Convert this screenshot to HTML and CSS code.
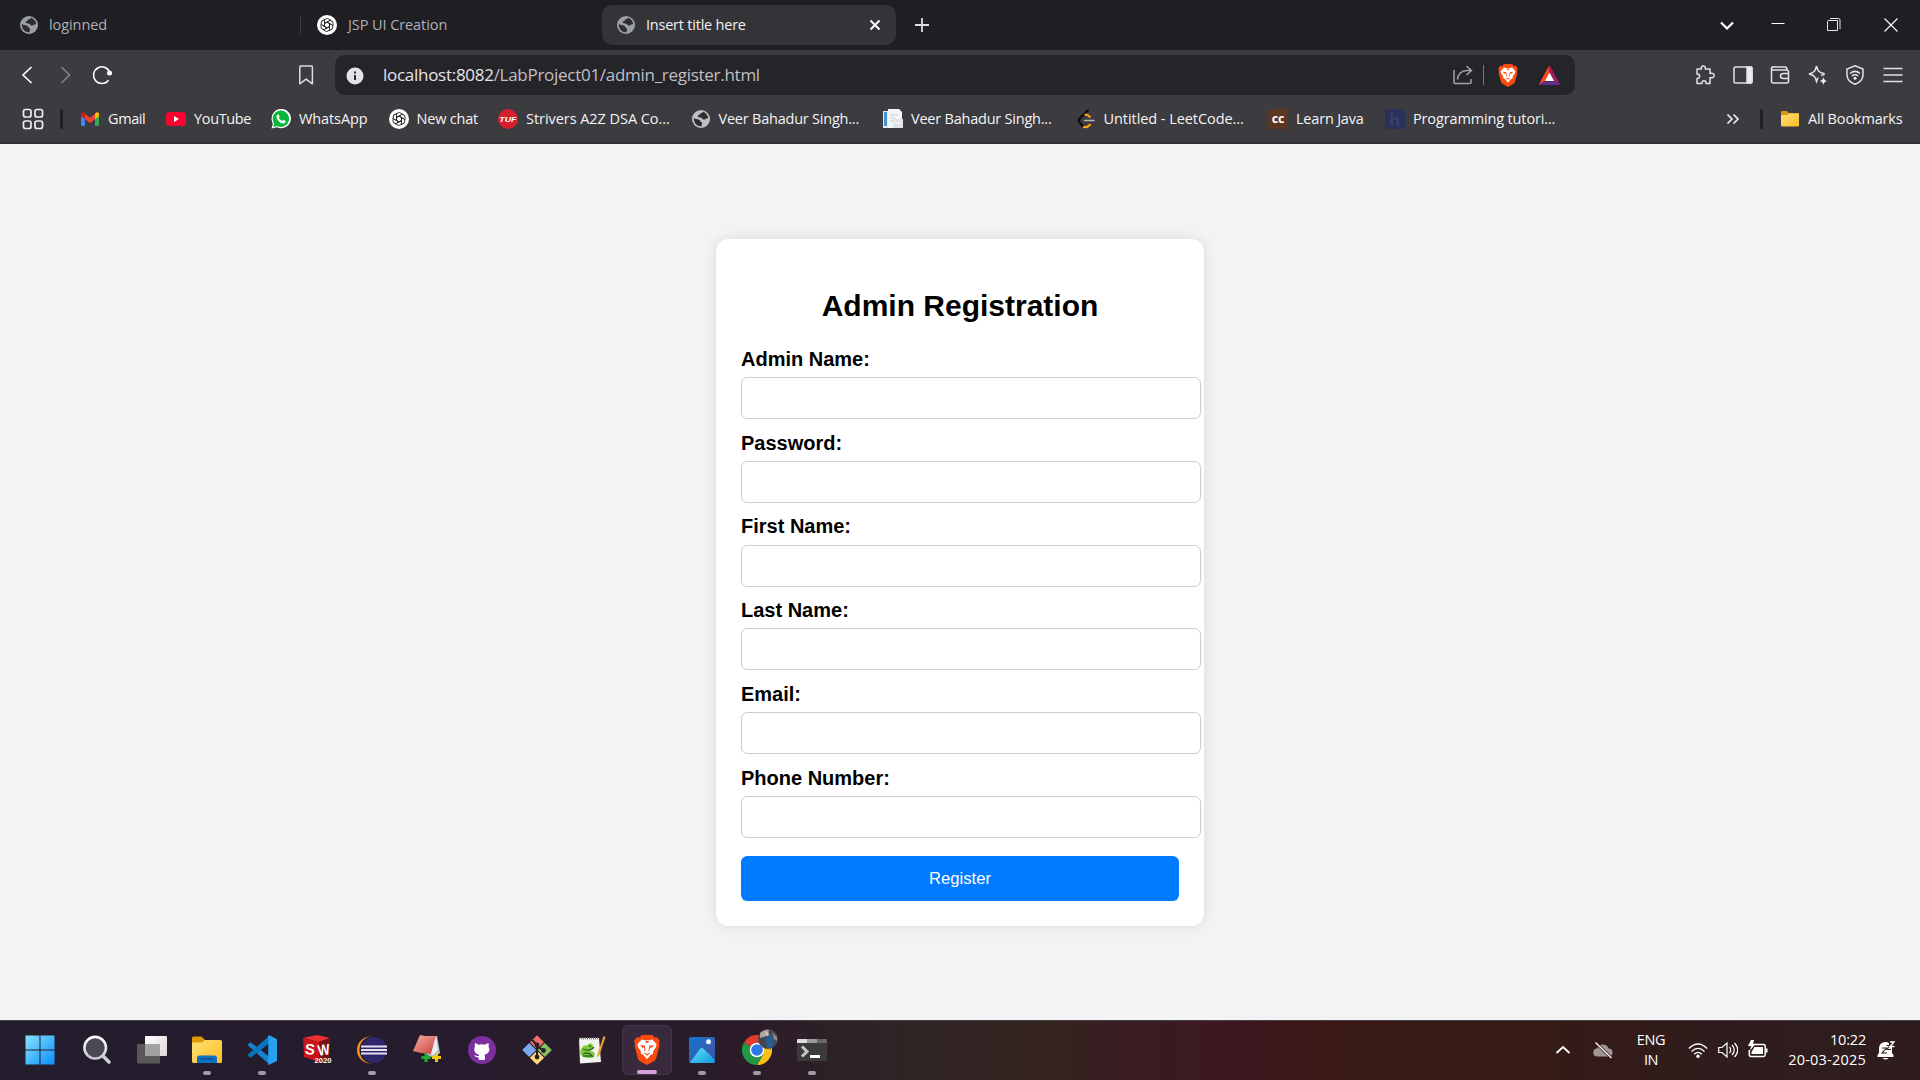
FILE: index.html
```html
<!DOCTYPE html>
<html lang="en">
<head>
<meta charset="utf-8">
<title>Insert title here</title>
<link rel="stylesheet" href="styles.css">
</head>
<body>
<svg class="defs" aria-hidden="true">
  <defs>
    <symbol id="globe" viewBox="0 0 20 20"><circle cx="10" cy="10" r="9" fill="currentColor"/><path d="M2.800 8.800c1.400 1.600 3.600 1.400 5.200 1.900 1.600.5 1 2 2.200 2.300 1.400.3.800 1.800.3 4.300-4.300.4-7.900-3.200-7.700-8.500ZM12.200 2.800c-.5 1.500-2.700.9-3.200 2.200-.4 1.200-2.300 1-2.300 2.300 0 1.300 2.300 1 3.500 1.400 1.500.5 1.300 1.900 2.800 1.900 1.600 0 1.600-1.600 4.200-1.300-.3-3.200-2.300-5.600-5-6.500Z" fill="#2d2d32"/></symbol>
    <symbol id="gpt" viewBox="0 0 20 20"><circle cx="10" cy="10" r="10" fill="#fff"/><g fill="none" stroke="#222" stroke-width=".9"><path id="petal" d="M7.500 8.500V6.200A2.700 2.700 0 0 1 11.700 4L14 5.400M7.500 8.500 10 7.100 14.200 9.500"/><use href="#petal" transform="rotate(60 10 10)"/><use href="#petal" transform="rotate(120 10 10)"/><use href="#petal" transform="rotate(180 10 10)"/><use href="#petal" transform="rotate(240 10 10)"/><use href="#petal" transform="rotate(300 10 10)"/></g></symbol>
    <symbol id="brave" viewBox="0 0 24 28"><path d="M7 0h10l2 2.300 2.500-.3L24 5.500l-.8 2.500.4 2-2.800 11c-.4 1.500-1.200 2.600-2.400 3.400L12 28l-6.400-3.600c-1.200-.8-2-1.900-2.400-3.400L.4 10l.4-2L0 5.500 2.500 2l2.500.3Z" fill="#fb4a10"/><path d="m7 4.300 3 .5h4l3-.5 4 4.400-.9 3.300-2.400 3.200.2 2-2.500 1.500-3.400 4-3.400-4-2.500-1.500.2-2L3.900 12 3 8.700Z" fill="#fff"/><path d="m5.500 9.500 4.300.4.900 4.700-1.500 1.700 2.800 1.400 2.800-1.400-1.500-1.700.9-4.700 4.300-.4-2.700 2.800-.8-1-1 4 1 1.500-3 2.500-3-2.500 1-1.500-1-4-.8 1ZM10 5.500h4L12 8Z" fill="#fb4a10"/></symbol>
    <linearGradient id="win" gradientUnits="userSpaceOnUse" x1="0" y1="0" x2="30" y2="30"><stop stop-color="#8be3ff"/><stop offset="1" stop-color="#078efb"/></linearGradient>
    <linearGradient id="lens" x2="0" y2="1"><stop stop-color="#fff"/><stop offset="1" stop-color="#c9cbd2"/></linearGradient>
    <linearGradient id="fold" x2="1" y2="1"><stop stop-color="#ffe07a"/><stop offset="1" stop-color="#fdbd22"/></linearGradient>
    <linearGradient id="grey" x2="1" y2="1"><stop stop-color="#fff"/><stop offset="1" stop-color="#d8d8d8"/></linearGradient>
    <linearGradient id="photo" x2="1" y2="1"><stop stop-color="#0b78d0"/><stop offset=".6" stop-color="#3a5eb2"/><stop offset="1" stop-color="#2b4fa8"/></linearGradient>
    <linearGradient id="peak" x2="1" y2="1"><stop stop-color="#62e4fb"/><stop offset="1" stop-color="#0d96dc"/></linearGradient>
    <linearGradient id="bookc" x2="1" y2="1"><stop stop-color="#f5b0a8"/><stop offset="1" stop-color="#c9403b"/></linearGradient>
  </defs>
</svg>

<header class="browser">
  <div class="tabs">
    <div class="tab tab-first"><svg class="i20 dim"><use href="#globe"/></svg><span>loginned</span></div>
    <div class="tab tab-second"><svg class="i20"><use href="#gpt"/></svg><span>JSP UI Creation</span></div>
    <div class="tab tab-active"><svg class="i20 dim"><use href="#globe"/></svg><span class="tab-title">Insert title here</span>
      <svg class="i20" viewBox="0 0 20 20"><path d="m5.500 5.500 9 9m0-9-9 9" stroke="#fff" stroke-width="2"/></svg></div>
    <svg class="new-tab" viewBox="0 0 20 20"><path d="M10 3v14M3 10h14" stroke="#ddd" stroke-width="1.800"/></svg>
    <div class="window-buttons">
      <svg viewBox="0 0 20 20"><path d="m4 7.500 6 6 6-6" stroke="#fff" stroke-width="2.200"/></svg>
      <svg viewBox="0 0 20 20"><path d="M3.500 8.500h13" stroke="#fff"/></svg>
      <svg viewBox="0 0 20 20"><path d="M4.500 5.500h9v10h-10v-9q0-1 1-1ZM6 3.500h8.500q1.500 0 1.500 1.500v9" stroke="#e8e8ea"/></svg>
      <svg viewBox="0 0 20 20"><path d="m3.500 3.500 13 13m0-13-13 13" stroke="#fff" stroke-width="1.100"/></svg>
    </div>
  </div>

  <div class="toolbar">
    <div class="nav">
      <svg viewBox="0 0 20 20"><path d="m14.500 2-8.500 8 8.500 8" stroke="#fff" stroke-width="1.700"/></svg>
      <svg viewBox="0 0 20 20"><path d="m6.500 2 8 8-8 8" stroke="#838287" stroke-width="1.700"/></svg>
      <svg viewBox="0 0 20 20"><path d="M18 8.500A8.300 8.300 0 1 0 16.500 15.200" stroke="#fff" stroke-width="1.500"/><circle cx="17.500" cy="8" r="2.500" fill="#fff"/></svg>
    </div>
    <svg class="mark" viewBox="0 0 20 20"><path d="M3.800 1.800q0-.8.8-.8h11q.8 0 .8.800v17l-6.300-4.700-6.300 4.700Z" stroke="#ddd" stroke-width="1.500" stroke-linejoin="round"/></svg>
    <div class="address">
      <svg class="i20 info" viewBox="0 0 20 20"><circle cx="10" cy="10" r="8.500" fill="#e4e3ea"/><path d="M9 9h2v5H9Zm0-3.500h2v2H9Z" fill="#2a292e"/></svg>
      <span class="url">localhost:8082<b>/LabProject01/admin_register.html</b></span>
      <svg class="share" viewBox="0 0 20 20"><path d="M1 5v12.500q0 1 1 1h15q1 0 1-1V14M4.500 14.500c.3-5.300 4-9 9.500-9h4M13.500 1l5 4.500-5 4.500" stroke="#a3a2a8" stroke-width="1.500"/></svg>
      <i class="thin"></i>
      <svg class="lion" viewBox="0 0 24 28"><use href="#brave"/></svg>
      <svg class="bat" viewBox="0 0 22 20"><path d="M11 0 0 20 11 13Z" fill="#ff4a1f"/><path d="m11 0 11 20-11-7Z" fill="#9e1f63"/><path d="M0 20h22l-5-3.500H5Z" fill="#662d91"/><path d="M11 7.500 6.500 16h9Z" fill="#fff"/></svg>
    </div>
    <div class="actions">
      <svg viewBox="0 0 20 20"><path d="M2 4h4.500c-1.500-4 5-4 3.700 0H15v4.500c5.500-1.700 5.500 5.500 0 4v6h-4c.6-3.800-4.800-3.800-4 0H2v-5c3.500 0 3.500-4.500 0-4.500Z" stroke-linejoin="round"/></svg>
      <svg viewBox="0 0 20 20"><rect x="1" y="2" width="18" height="16" rx="1.500"/><path d="M14 2h4q1 0 1 1v14q0 1-1 1h-4Z" fill="#eee"/></svg>
      <svg viewBox="0 0 20 20"><path d="M1.500 5v11q0 2 2 2h13q2 0 2-2V7q0-2-2-2H2.500Q1 4.500 1.500 3T4 2h11q2 0 2 3M18.500 8.500h-5q-3 0-3 2.500t3 2.500h5"/></svg>
      <svg viewBox="0 0 20 20"><path d="M8.500 1c1.200 5 2.500 6.300 7.500 7.500v1l-3 1M8.500 1c-1.200 5-2.500 6.700-7.500 8 5 1.200 6.300 2.500 7.500 7.500l1.500-4"/><path d="M15.500 12q.5 3.300 3.500 4-3 .6-3.500 4-.6-3.400-4-4 3.400-.7 4-4Z" fill="#eee" stroke="none"/></svg>
      <svg viewBox="0 0 20 20"><path d="M10 .8 18 4v6c0 4.500-3.500 7.500-8 9.300C5.500 17.500 2 14.500 2 10V4ZM5 8.500q5-4.200 10 0M6.800 11q3.200-2.500 6.400 0"/><circle cx="10" cy="13.200" r="1.500" fill="#eee" stroke="none"/></svg>
      <svg viewBox="0 0 20 20"><path d="M.5 3.500h19M.5 10h19M.5 16.500h19"/></svg>
    </div>
  </div>

  <nav class="bookmarks">
    <svg class="grid" viewBox="0 0 22 22"><g fill="none" stroke="#eee" stroke-width="1.700"><rect x="1.500" y="1.500" width="7.500" height="7.500" rx="2"/><rect x="13" y="1.500" width="7.500" height="7.500" rx="2"/><rect x="1.500" y="13" width="7.500" height="7.500" rx="2"/><rect x="13" y="13" width="7.500" height="7.500" rx="2"/></g></svg>
    <i class="thick"></i>
    <a class="bm w-gmail"><svg class="i20" viewBox="0 0 20 20"><path d="M1 5v10.500q0 1.500 1.500 1.500H5V8Z" fill="#4285f4"/><path d="M15 8v9h2.500q1.500 0 1.500-1.500V5Z" fill="#34a853"/><path d="m5 4.700 5 4 5-4v5.600l-5 3.900-5-3.900Z" fill="#ea4335"/><path d="M1 5.500c0-2.500 2-3 4-.8v5.600L1 7.300Z" fill="#c5221f"/><path d="M19 5.500c0-2.500-2-3-4-.8v5.600l4-3Z" fill="#fbbc04"/></svg><span>Gmail</span></a>
    <a class="bm w-yt"><svg class="i20" viewBox="0 0 20 20"><rect y="3" width="20" height="14" rx="3.500" fill="#ff0033"/><path d="m8 7 5 3-5 3Z" fill="#fff"/></svg><span>YouTube</span></a>
    <a class="bm w-wa"><svg class="i20" viewBox="0 0 20 20"><path d="M.5 19.500 1.900 14.500A9.700 9.700 0 1 1 6 18.300Z" fill="#fff"/><path d="m2.200 17.900.9-3.500A8.200 8.200 0 1 1 6 17Z" fill="#08b83c"/><path d="m6.500 5.500 1-.2 1.200 2.500-.9 1.300q1.200 2.200 3.300 3l1.100-1.300 2.500 1.200q0 2.300-2.500 2.500Q7.500 14 5.500 8.500q-.2-2 1-3Z" fill="#fff"/></svg><span>WhatsApp</span></a>
    <a class="bm w-new"><svg class="i20"><use href="#gpt"/></svg><span>New chat</span></a>
    <a class="bm w-tuf"><svg class="i20" viewBox="0 0 20 20"><circle cx="10" cy="10" r="10" fill="#d51f31"/><text x="1.300" y="12.500" textLength="17" lengthAdjust="spacingAndGlyphs" class="tuf">TUF</text></svg><span>Strivers A2Z DSA Co...</span></a>
    <a class="bm w-veer"><svg class="i20 bright"><use href="#globe"/></svg><span>Veer Bahadur Singh...</span></a>
    <a class="bm w-veer"><svg class="i20" viewBox="0 0 20 20"><path d="M0 2h6v17H0Z" fill="#e6e9ed"/><path d="M1 3h3v14H1Z" fill="#4793cf"/><path d="M5 0h11l3 3v16H5Z" fill="#f4f5f7"/><path d="M7 6h8M7 9h5M7 12h3" stroke="#c3c8cf"/><path d="M10 10h10v9H10Z" fill="#dfe2e7"/><path d="M11 14h8" stroke="#fff"/></svg><span>Veer Bahadur Singh...</span></a>
    <a class="bm w-leet"><svg class="i20" viewBox="0 0 20 20"><g fill="none" stroke-width="2.200" stroke-linecap="round"><path d="M12 1.300 3.500 9.800q-1.500 1.700 0 3.600l3 3.400" stroke="#0a0a0a"/><path d="M9.500 5.600q2-.3 4.300 2.200M8 18q3.200.8 6-2.200" stroke="#ffa116"/><path d="M8.500 11.500H18" stroke="#b3b3b3" stroke-width="1.600"/></g></svg><span>Untitled - LeetCode...</span></a>
    <a class="bm w-learn"><svg class="i20" viewBox="0 0 20 20"><rect width="20" height="20" fill="#5b3621"/><text x="10" y="14" text-anchor="middle" class="cc">cc</text></svg><span>Learn Java</span></a>
    <a class="bm w-prog"><svg class="i20" viewBox="0 0 20 20"><rect width="20" height="20" rx="2" fill="#29325a"/><path d="M5.500 3.500H8v13H5.500ZM8 9q2-1.500 3.500-1 2.500.5 2.500 3v5.500h-2.500V11q-1.500-1.800-3.500.3" fill="#3a3f63"/></svg><span>Programming tutori...</span></a>
    <svg class="more" viewBox="0 0 14 14"><path d="m1.500 2.500 4.500 4.500-4.500 4.500M7.500 2.500 12 7l-4.500 4.500" stroke="#eee" stroke-width="1.700"/></svg>
    <i class="thick end"></i>
    <a class="bm w-all"><svg class="i20" viewBox="0 0 20 20"><path d="M1 3q0-1 1-1h5l2 2h9q1 0 1 1v12H1Z" fill="#d99a12"/><path d="M1 6h6.500L9.500 4.500H18q1 0 1 1V16q0 1.500-1.500 1.500h-15Q1 17.500 1 16Z" fill="url(#fold)"/></svg><span>All Bookmarks</span></a>
  </nav>
</header>

<main class="page">
  <form class="card">
    <h2>Admin Registration</h2>
    <label for="a">Admin Name:</label><input id="a" type="text">
    <label for="b">Password:</label><input id="b" type="password">
    <label for="c">First Name:</label><input id="c" type="text">
    <label for="d">Last Name:</label><input id="d" type="text">
    <label for="e">Email:</label><input id="e" type="email">
    <label for="f">Phone Number:</label><input id="f" type="text">
    <button type="button">Register</button>
  </form>
</main>

<footer class="taskbar">
  <div class="app start"><svg viewBox="0 0 30 30"><path d="M.5.500h14v14H.5ZM15.500.500h14v14h-14ZM.5 15.500h14v14H.5ZM15.500 15.500h14v14h-14Z" fill="url(#win)"/></svg></div>
  <div class="app"><svg viewBox="0 0 30 30"><path d="m20 20 7 7" stroke="#cfd1d8" stroke-width="3.600" stroke-linecap="round"/><circle cx="13.200" cy="12.700" r="10.800" fill="#4b4757" stroke="url(#lens)" stroke-width="2.600"/></svg></div>
  <div class="app"><svg viewBox="0 0 30 30"><rect x="8" y="1" width="22" height="20" rx="1" fill="url(#grey)"/><rect x="0" y="9" width="23" height="19.500" rx="1" fill="#5d5c5c" opacity=".93"/><path d="M8 9h15v12H8Z" fill="#a2a2a2"/></svg></div>
  <div class="app run"><svg viewBox="0 0 30 30"><path d="M0 3q0-1.500 1.500-1.500h8L13 5v7H0Z" fill="#e09a08"/><path d="M0 7.500h10L13 5h15.500Q30 5 30 6.500v20q0 1.500-1.500 1.500h-27Q0 28 0 26.500Z" fill="url(#fold)"/><path d="M5 28v-5q0-2.500 2.500-2.500h15Q25 20.500 25 23v5Z" fill="#0b70c1"/><path d="M8.500 24h13" stroke="#06457e"/></svg></div>
  <div class="app run"><svg viewBox="0 0 30 30"><path d="m.5 10 2.300-2.300q.7-.5 1.500 0L22.500 22v7.500Z" fill="#1783cf"/><path d="m.5 20 2.300 2.300q.7.500 1.500 0L22.500 8V.5Z" fill="#0874bd"/><path d="m22 .2 7 3.300q1 .5 1 1.500v20q0 1-1 1.500l-7 3.300q-1 .3-.8-.8V1Q21 0 22 .2Z" fill="#26a0ef"/></svg></div>
  <div class="app"><svg viewBox="0 0 30 30"><path d="m1 3 14-3 13 3-11 4Z" fill="#ef2f32"/><path d="m1 3 16 4v20L2 22Z" fill="#c8151c"/><path d="m17 7 11-4-1 19-10 5Z" fill="#7e1015"/><g class="sw"><text x="3" y="19.500" textLength="10" lengthAdjust="spacingAndGlyphs" transform="rotate(5 8 14)">S</text><text x="15.500" y="20" textLength="12" lengthAdjust="spacingAndGlyphs" transform="rotate(-8 21 14)">W</text></g><text x="12.500" y="28" textLength="17" lengthAdjust="spacingAndGlyphs" class="year">2020</text></svg></div>
  <div class="app run"><svg viewBox="0 0 30 30"><circle cx="13.500" cy="15" r="13.500" fill="#f7941e"/><circle cx="16.500" cy="15" r="14" fill="#221b2b"/><circle cx="17" cy="15" r="13" fill="#30266b"/><path d="M4 11.500h26M4 15h26M4 18.500h26" stroke="#e4e2f1" stroke-width="2"/></svg></div>
  <div class="app"><svg viewBox="0 0 30 30"><path d="M8 1h17l3 17-6 5-7-3Z" fill="#b9c0c5"/><path d="M8 0q8 2 16 1L19 19Q10 19 1 16Z" fill="url(#bookc)"/><path d="m24 1 2 14-5 5-2-1Z" fill="#e8eef0"/><path d="M14 18v9m-4.500-4.500h9" stroke="#22ac37" stroke-width="3"/><path d="M24.500 18v9m-4.500-4.500h9" stroke="#f2c615" stroke-width="3"/></svg></div>
  <div class="app"><svg viewBox="0 0 30 30"><circle cx="15" cy="15" r="14" fill="#7d2fa0"/><path d="M11.500 24.500v-2.500c-2.500.7-3.500-.7-4.300-2 1.700 0 2 1.500 4.300 1l.8-1.300c-5-.8-6-5.500-4.300-8-.4-1.300-.2-2.700 0-3.500 1.700 0 2.500 1 3.500 1.500q3.300-.8 6.500 0c1-.5 1.800-1.500 3.500-1.500.3 1 .5 2.300 0 3.500 1.800 2.500.9 7.200-4.300 8 .8.800.8 1.600.8 2.300v2.500q-3 1-6.500 0Z" fill="#fff"/></svg></div>
  <div class="app"><svg viewBox="0 0 30 30"><g transform="rotate(45 15 15)"><rect x="4.500" y="4.500" width="10" height="10" fill="#ed6c68"/><rect x="15.500" y="4.500" width="10" height="10" fill="#83c35b"/><rect x="4.500" y="15.500" width="10" height="10" fill="#79a7f0"/><rect x="15.500" y="15.500" width="10" height="10" fill="#ffd978"/></g><path d="M10 5 15 10v13M15 11l7 5" stroke="#2b1d25" stroke-width="2"/><circle cx="15" cy="10" r="2.400" fill="#2b1d25"/><circle cx="15" cy="22" r="2.400" fill="#2b1d25"/><circle cx="21.500" cy="15.500" r="2.400" fill="#2b1d25"/></svg></div>
  <div class="app"><svg viewBox="0 0 30 30"><path d="M2 3h20l2 24-21 1.500Z" fill="#f1f4ee"/><path d="M2 3.500h20" stroke="#7b7f7a" stroke-width="2" stroke-dasharray="1 1"/><path d="M4 14c3-5 5-3 7-4 2-3 6-1 5 2l-3 4c4 0 6 3 4 6-4 2-11 1-13-2-1-2-1-4 0-6Z" fill="#82cc3c"/><path d="M6 14q7 3 11-2M6 19q6-3 10 3M12 10l2 2m-8 9h9" stroke="#296b20" stroke-width="1.300"/><path d="m28.500 2-6 18-2 3v-4L26.500 1Z" fill="#e8a12c"/></svg></div>
  <div class="app current"><svg viewBox="0 0 26 30"><use href="#brave" width="26" height="30"/></svg></div>
  <div class="app run"><svg viewBox="0 0 30 30"><rect x="2" y="2" width="26" height="26" rx="2" fill="url(#photo)"/><path d="M3 27.500 13 14q1.500-2 3.500-.3L28 25v1q0 2-2 2H4Z" fill="url(#peak)"/><circle cx="21.500" cy="6.800" r="2.500" fill="#eaf6ff"/></svg></div>
  <div class="app run chrome"><svg viewBox="0 0 30 30"><path d="M15 15 2 7.500A15 15 0 0 1 28 7.500H15Z" fill="#e33b2e"/><path d="M15 15H28.500l-.5-7.500A15 15 0 0 1 15 30l6.500-11Z" fill="#fbc116"/><path d="M15 15l6.500 3.700L15 30A15 15 0 0 1 2 7.500Z" fill="#229847"/><path d="M15 7.500h13L15 15Z" fill="#e33b2e"/><path d="M15 15h13.100V7.500L21 11Z" fill="#fbc116"/><circle cx="15" cy="15" r="7.300" fill="#fff"/><circle cx="15" cy="15" r="5.800" fill="#2d78e8"/></svg><svg class="avatar" viewBox="0 0 20 20"><circle cx="10" cy="10" r="10" fill="#44474d"/><path d="M2 4q5-4 9-3l-2 6-7 2Z" fill="#a9a8a5"/><path d="m7 7 6-2 3 4-1 9-6 1Z" fill="#285c91"/><path d="m14 3 5 5v4l-3-2Z" fill="#9a8a81"/><circle cx="9" cy="5" r="2" fill="#d9b7a0"/></svg></div>
  <div class="app run"><svg viewBox="0 0 30 30"><rect y="4" width="30" height="22" rx="1.500" fill="#3b3b3d"/><path d="M0 8V5q0-1 1-1h9v4Z" fill="#ddd"/><path d="M10 4h10v4H10Z" fill="#999"/><path d="M20 4h9q1 0 1 1v3H20Z" fill="#686868"/><path d="m5 11.500 5 5-5 5" stroke="#c8c8c8" stroke-width="3"/><path d="M13 21.500h10" stroke="#fff" stroke-width="3"/></svg></div>

  <div class="tray">
    <svg class="t-up" viewBox="0 0 20 20"><path d="m3.500 13 6.500-6 6.500 6" stroke="#fff" stroke-width="1.800"/></svg>
    <svg class="t-cloud" viewBox="0 0 20 20"><path d="M4.500 16.500a4 4 0 0 1-.3-8 6 6 0 0 1 11.300 0 4 4 0 0 1 0 8Z" fill="#a19594"/><path d="m2.500 2.500 16 15.500" stroke="#321b19" stroke-width="2.800"/><path d="m2.500 2.500 16 15.500" stroke="#fff" stroke-width="1.300"/></svg>
    <div class="lang"><span>ENG</span><span>IN</span></div>
    <svg class="t-wifi" viewBox="0 0 20 20"><path d="M.8 8.500q9.200-9 18.400 0M3.500 11.500q6.500-6.300 13 0M6.200 14.200q3.800-3.600 7.600 0" stroke="#fff" stroke-width="1.300"/><circle cx="10" cy="16.200" r="1.700" fill="#fff"/></svg>
    <svg class="t-vol" viewBox="0 0 20 20"><path d="M.7 7.500H4L9 3v14l-5-4.500H.7ZM11.500 7q2.500 3 0 6M14 5q4.500 5 0 10M16.500 3q6.500 7 0 14" stroke="#fff" stroke-width="1.200"/></svg>
    <svg class="t-bat" viewBox="0 0 20 20"><path d="M5 4.500h10.500q1.700 0 1.700 1.700v8.600q0 1.700-1.700 1.700H3q-1.700 0-1.700-1.700V10M18.800 8.500v4" stroke="#fff" stroke-width="1.500"/><path d="M6.500 7H15v7H3.500v-2Z" fill="#fff"/><path d="M3 0h3L5 4h2.500L2 10.500 3 6H0Z" fill="#fff"/></svg>
    <div class="clock"><span class="time">10:22</span><span class="date">20-03-2025</span></div>
    <svg class="t-bell" viewBox="0 0 20 20"><path d="M.5 17v-2L2 13V8.500A6.500 6.500 0 0 1 12 3v4h3v6l1.500 2v2Z" fill="#fff"/><path d="M5.500 18h6q-3 3-6 0Z" fill="#fff"/><path d="M5 8h4.500L5 13h5M9.500 5.500h3.500l-3 4h4" stroke="#2f1d1d" stroke-width="1.100"/><path d="M13 2h4l-4 4.500h4.500" stroke="#fff" stroke-width="1.300"/></svg>
  </div>
</footer>
</body>
</html>
```
FILE: styles.css
```css
* { box-sizing: border-box; }
html, body { margin: 0; height: 100%; }
body {
  display: flex; flex-direction: column; overflow: hidden;
  background: #f3f3f3;
  font-family: "Open Sans", "Noto Sans", sans-serif; font-size: 14.5px; letter-spacing: -.2px;
}
svg { display: block; flex: none; fill: none; }
.defs { position: absolute; width: 0; height: 0; }
.i20 { width: 20px; height: 20px; }
.dim { color: #9aa0a6; }
.bright { color: #bdc1c6; }

.browser { flex: none; height: 144px; background: #3c3b3f; border-bottom: 2px solid #333238; color: #fff; }

.tabs { display: flex; align-items: center; height: 50px; background: #1f1e23; white-space: nowrap; }
.tab { display: flex; align-items: center; height: 40px; color: #b1b0b5; }
.tab span, .bm span { padding-bottom: 2px; }
.tab-first { width: 301px; padding-left: 19px; gap: 10px; height: 20px; border-right: 1px solid #3c3b3f; letter-spacing: -.08px; }
.tab-second { width: 301px; padding-left: 16px; gap: 11px; letter-spacing: -.08px; }
.tab-active { width: 294px; padding: 0 11px 0 14px; gap: 10px; border-radius: 10px; background: #343337; color: #f2f1f5; }
.tab-title { flex: 1; letter-spacing: -.22px; }
.new-tab { width: 20px; height: 20px; margin-left: 16px; }
.window-buttons { display: flex; margin-left: auto; padding-right: 19px; }
.window-buttons svg { width: 20px; height: 20px; }
.window-buttons svg:nth-child(2) { margin-left: 31px; }
.window-buttons svg:nth-child(3) { margin-left: 36px; }
.window-buttons svg:nth-child(4) { margin-left: 37px; }

.toolbar { display: flex; align-items: center; height: 50px; }
.nav { display: flex; gap: 17.5px; padding-left: 17px; width: 296px; }
.nav svg, .mark { width: 20px; height: 20px; }
.address { display: flex; align-items: center; width: 1240px; height: 40px; margin-left: 19px; padding-left: 10px; border-radius: 10px; background: #252429; }
.info { margin-top: 2px; }
.url { flex: 1; margin-left: 18px; padding-bottom: 2px; font-size: 17px; letter-spacing: -.28px; color: #e5e4e8; white-space: nowrap; }
.url b { font-weight: 400; color: #c0bfc4; }
.share { width: 20px; height: 20px; }
.thin { width: 1px; height: 20px; margin: 0 14px 0 10px; background: #77767b; }
.lion { width: 20px; height: 23px; }
.bat { width: 23px; height: 20px; margin: 0 14px 0 20px; }
.actions { display: flex; gap: 17.5px; margin-left: 120px; }
.actions svg { width: 20px; height: 20px; stroke: #e2e1e6; stroke-width: 1.5; }

.bookmarks { display: flex; align-items: center; height: 38px; white-space: nowrap; }
.grid { width: 22px; height: 22px; margin-left: 22px; }
.thick { flex: none; width: 3px; height: 20px; margin: 0 17px 0 16px; border-radius: 2px; background: #1f1e23; }
.bm { display: flex; align-items: center; gap: 8px; flex: none; color: #f4f3f7; }
.w-gmail { width: 86px; letter-spacing: -.4px; }
.w-yt { width: 105px; letter-spacing: -.35px; }
.w-wa { width: 117.5px; letter-spacing: -.1px; }
.w-new { width: 109.5px; }
.w-tuf { width: 192.5px; letter-spacing: -.05px; }
.w-veer { width: 192.5px; letter-spacing: -.22px; }
.w-leet { width: 192.5px; letter-spacing: -.06px; }
.w-learn { width: 117px; }
.w-prog { width: 170px; letter-spacing: -.14px; }
.w-all { width: 140px; letter-spacing: -.16px; }
.more { width: 14px; height: 14px; margin-left: auto; }
.thick.end { margin: 0 17px 0 20px; }
.tuf { fill: #fff; font: italic 700 7px "Liberation Sans", sans-serif; letter-spacing: 0; }
.cc { fill: #fff; font: 700 12.5px "Open Sans", sans-serif; }

.page { flex: 1; display: flex; align-items: center; justify-content: center; font-family: "Liberation Sans", Arial, sans-serif; letter-spacing: 0; }
.card { width: 488px; height: 687px; padding: 25.2px 25px 0; border-radius: 12.5px; background: #fff; box-shadow: 0 0 12.5px rgba(0, 0, 0, .1); }
.card h2 { margin: 25.3px 0 24.9px; font-size: 30px; line-height: 34px; text-align: center; color: #000; }
.card label { display: block; height: 23px; font-size: 20px; line-height: 23px; font-weight: 700; color: #000; }
.card input { display: block; width: 460px; height: 42px; margin: 6.25px 0 12.5px; border: 1px solid #ccc; border-radius: 6.25px; background: #fff; }
.card button { display: block; width: 438px; height: 45px; margin-top: 18.2px; padding: 0; border: 0; border-radius: 6.25px; background: #007bff; color: #fff; font: 16.67px "Liberation Sans", Arial, sans-serif; }

.taskbar {
  flex: none; display: flex; height: 60px; padding-left: 11px; border-top: 1px solid #45404a;
  background: linear-gradient(90deg, #231d2d 0, #261c2d 450px, #2c1c29 750px, #2f2425 900px, #35231f 1050px, #3a1b22 1150px, #3d181d 1270px, #3a1a15 1340px, #371b15 1520px, #301c1c 1700px, #2f1d1e 100%);
}
.app { position: relative; display: flex; align-items: center; justify-content: center; flex: none; width: 55px; height: 58px; }
.app > svg { width: 30px; height: 30px; }
.start { width: 58px; }
.run::after, .current::after { content: ""; position: absolute; bottom: 4px; width: 8px; height: 4px; border-radius: 2px; background: #a09ca3; }
.current { width: 50px; height: 50px; margin: 4px 2.5px; border: 1px solid #43364a; border-radius: 6px; background: #382a3c; }
.current::after { bottom: 0; width: 20px; background: #d7a0dd; }
.chrome .avatar { position: absolute; left: 29px; top: 8px; width: 20px; height: 20px; }
.sw { fill: #fff; font: 700 15px "Liberation Sans", sans-serif; letter-spacing: 0; }
.year { fill: #fff; font: 700 8px "Liberation Sans", sans-serif; letter-spacing: 0; }
.tray { display: flex; align-items: center; margin-left: auto; width: 367px; height: 58px; color: #fff; white-space: nowrap; }
.tray > svg { width: 20px; height: 20px; }
.t-cloud { margin-left: 20px; }
.lang { display: flex; flex-direction: column; align-items: center; width: 52px; margin-left: 12px; line-height: 20px; letter-spacing: -.4px; }
.t-wifi { margin-left: 11px; }
.t-vol { margin-left: 10px; }
.t-bat { margin-left: 10px; }
.clock { display: flex; flex-direction: column; align-items: flex-end; width: 98px; line-height: 20px; }
.date { letter-spacing: .22px; }
.t-bell { margin-left: 11px; }
```
